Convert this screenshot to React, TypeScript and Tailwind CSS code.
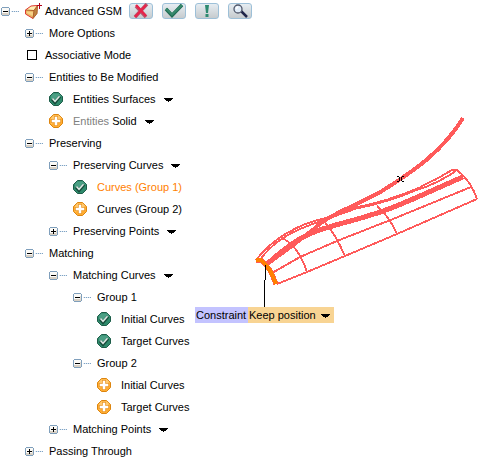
import { useState, type ReactNode } from "react";

type Status = "done" | "add";

interface TreeItem {
  id: string;
  label: string;
  prefix?: string;
  status?: Status;
  menu?: boolean;
  checkbox?: boolean;
  active?: boolean;
  open?: boolean;
  children?: TreeItem[];
}

const items: TreeItem[] = [
  { id: "more", label: "More Options" },
  { id: "assoc", label: "Associative Mode", checkbox: true },
  {
    id: "entities",
    label: "Entities to Be Modified",
    open: true,
    children: [
      { id: "surfaces", label: "Entities Surfaces", status: "done", menu: true },
      { id: "solid", prefix: "Entities", label: "Solid", status: "add", menu: true },
    ],
  },
  {
    id: "preserving",
    label: "Preserving",
    open: true,
    children: [
      {
        id: "pcurves",
        label: "Preserving Curves",
        menu: true,
        open: true,
        children: [
          { id: "pc1", label: "Curves (Group 1)", status: "done", active: true },
          { id: "pc2", label: "Curves (Group 2)", status: "add" },
        ],
      },
      { id: "ppoints", label: "Preserving Points", menu: true },
    ],
  },
  {
    id: "matching",
    label: "Matching",
    open: true,
    children: [
      {
        id: "mcurves",
        label: "Matching Curves",
        menu: true,
        open: true,
        children: [
          {
            id: "g1",
            label: "Group 1",
            open: true,
            children: [
              { id: "g1i", label: "Initial Curves", status: "done" },
              { id: "g1t", label: "Target Curves", status: "done" },
            ],
          },
          {
            id: "g2",
            label: "Group 2",
            open: true,
            children: [
              { id: "g2i", label: "Initial Curves", status: "add" },
              { id: "g2t", label: "Target Curves", status: "add" },
            ],
          },
        ],
      },
      { id: "mpoints", label: "Matching Points", menu: true },
    ],
  },
  { id: "passing", label: "Passing Through" },
];

function Arrow() {
  return (
    <svg width="9" height="4" viewBox="0 0 9 4" shapeRendering="crispEdges" aria-hidden="true">
      <path d="M0 0h9v1H0zM1 1h7v1H1zM2 2h5v1H2zM4 3h1v1H4z" fill="#000" />
    </svg>
  );
}

function Expander({ open, onToggle, label }: { open: boolean; onToggle: () => void; label: string }) {
  return (
    <button
      type="button"
      aria-expanded={open}
      aria-label={label}
      onClick={onToggle}
      className="flex w-6 shrink-0 items-center"
    >
      <svg width="18" height="9" viewBox="0 0 18 9" shapeRendering="crispEdges" aria-hidden="true">
        <path d="M1 0h7v1H1zM1 8h7v1H1zM0 1h1v7H0zM8 1h1v7H8z" fill="#7f9fbc" />
        <path d="M1 1h7v5H1z" fill="#fbfaf7" />
        <path d="M1 6h7v2H1z" fill="#d8d0c4" />
        <path d="M7 3h1v4H7z" fill="#e3ddd3" />
        <path d="M2 4h5v1H2z" fill="#000" />
        {!open && <path d="M4 2h1v5H4z" fill="#000" />}
        <path d="M10 4h8v1h-8z" fill="#dde8f2" />
        <path d="M11 4h1v1h-1zM13 4h1v1h-1zM15 4h1v1h-1zM17 4h1v1h-1z" fill="#7fa3c4" />
      </svg>
    </button>
  );
}

function StatusIcon({ status }: { status: Status }) {
  const octagon = "M4.5.5h5l4 4v5l-4 4h-5l-4-4v-5z";
  return (
    <span className="flex w-6 shrink-0">
      {status === "done" ? (
        <svg width="14" height="14" viewBox="0 0 14 14" role="img" aria-label="Defined">
          <path d={octagon} fill="#2f8a6c" stroke="#1d5c48" />
          <path d="M4 1.500h6L12.500 4 2 9V4z" fill="#5fae94" opacity=".6" />
          <path d="M3 7l3 3.500 5-6" fill="none" stroke="#174c3b" strokeWidth="3" />
          <path d="M3.500 6.500L6 9.200l4.500-5" fill="none" stroke="#dfeae6" strokeWidth="1.600" />
        </svg>
      ) : (
        <svg width="14" height="14" viewBox="0 0 14 14" role="img" aria-label="Add">
          <path d={octagon} fill="#ffac30" stroke="#dc8510" />
          <path d="M4 1.500h6L12.500 4 2 10V4z" fill="#ffd58a" opacity=".7" />
          <path d="M5 2h4v3h3v4H9v3H5V9H2V5h3z" fill="#ec9d35" />
          <path d="M6 3h2v3h3v2H8v3H6V8H3V6h3z" fill="#fff" stroke="#fff" strokeWidth=".4" />
        </svg>
      )}
    </span>
  );
}

function TreeNode({ item }: { item: TreeItem }) {
  const [open, setOpen] = useState(Boolean(item.open));
  return (
    <li>
      <div className="flex h-[22px] items-center whitespace-nowrap">
        {item.checkbox ? (
          <label className="flex items-center gap-2 pl-0.5">
            <input type="checkbox" className="size-[10px] appearance-none border border-black bg-white checked:bg-black" />
            {item.label}
          </label>
        ) : (
          <>
            {item.status ? (
              <StatusIcon status={item.status} />
            ) : (
              <Expander open={open} onToggle={() => setOpen(!open)} label={"Toggle " + item.label} />
            )}
            <span className={item.active ? "text-[#ff8000]" : ""}>
              {item.prefix && <span className="text-[#808080]">{item.prefix} </span>}
              {item.label}
            </span>
          </>
        )}
        {item.menu && (
          <button type="button" aria-label={item.label + " menu"} className="ml-2 pt-0.5">
            <Arrow />
          </button>
        )}
      </div>
      {item.children && open && (
        <ul className="pl-6">
          {item.children.map((child) => (
            <TreeNode key={child.id} item={child} />
          ))}
        </ul>
      )}
    </li>
  );
}

function ToolButton({ label, children }: { label: string; children: ReactNode }) {
  return (
    <button
      type="button"
      aria-label={label}
      className="flex h-4 w-6 items-center justify-center rounded-[3px] border border-[#9dc0d8] bg-linear-to-b from-[#e6edf2] to-[#c6cbce]"
    >
      <svg width="22" height="16" viewBox="0 0 22 16" className="shrink-0" aria-hidden="true">
        {children}
      </svg>
    </button>
  );
}

function SolidIcon() {
  return (
    <svg width="17" height="18" viewBox="0 0 17 18" className="shrink-0" aria-hidden="true">
      <path d="M.5 8L6 4l6.500-.5-.5 8-4 5L.5 12z" fill="#e9b765" />
      <path d="M.5 8L6 4l6.500-.5L9 8z" fill="#fff0b4" />
      <path d="M9 8l3.500-4.500-.5 8-4 5z" fill="#bd8540" />
      <path d="M2 9.500l6 .500v4L2 11z" fill="#f7d286" />
      <path d="M.5 8l8.500.500-1 8M9 8.500l3.500-5-.5 8-4 5" fill="none" stroke="#b3612d" />
      <path d="M12 3.500L6 4 .5 8v4l7.500 4.500" fill="none" stroke="#dd3a35" />
      <path d="M14 1h1v6h-1zM12 3h5v1h-5z" fill="#b00018" shapeRendering="crispEdges" />
    </svg>
  );
}

function Viewport() {
  return (
    <div className="relative min-w-0 flex-1">
      <svg
        width="291"
        height="440"
        viewBox="195 22 291 440"
        shapeRendering="crispEdges"
        fill="none"
        stroke="#ff5a5a"
        role="img"
        aria-label="Surface wireframe with constrained curves"
      >
        <path d="M463 118C443 151 414 171 382 191C353 207 326 216 314 229L293 245L266 265" strokeWidth="4" />
        <path d="M463 177C432 190 401 206 374 214C351 222 329 225 307 235Q289 244 266 265" strokeWidth="5" />
        <path d="M420 188C397 198 377 204 356 208L328 218" strokeWidth="3" />
        <g strokeWidth="1.900">
          <path d="M452 170Q436 180 420 187M456 171Q438 183 420 189" />
          <path d="M330 217C304 222 291 231 282 236Q267 246 256 260" />
          <path d="M328 219Q298 228 283 238Q269 247 260 260" />
          <path d="M452 170H457Q471 181 477 199" />
          <path d="M471 187L393 219L337 241L300 257L272 273" />
          <path d="M477 199L397 234L345 256L307 272L277 284" />
          <path d="M377 206Q389 216 397 234" />
          <path d="M323 220Q335 233 345 256" />
          <path d="M281 238Q297 243 307 272" />
        </g>
        <path d="M256 260L261 260L266 265L271 272L276 284" strokeWidth="5" />
        <path d="M256 260L261 260L266 265L271 272L276 284" stroke="#ff8000" strokeWidth="4" />
        <path d="M265.500 265V280M264.500 280V307" stroke="#000" strokeWidth="1" />
        <path
          d="M397 176h2v1h-2zM399 177h1v4h-1zM397 181h2v1h-2zM402 176h2v1h-2zM401 177h1v4h-1zM402 181h2v1h-2z"
          fill="#000"
          stroke="none"
        />
      </svg>
      <div className="absolute top-[285px] left-0 flex h-4 items-center whitespace-nowrap">
        <label htmlFor="constraint" className="flex h-4 w-[53px] items-center bg-[#c3c3ff] pl-px">
          Constraint
        </label>
        <div className="relative flex h-4 w-[86px] items-center bg-[#f8d493]">
          <select id="constraint" className="h-4 w-full appearance-none bg-transparent pl-px leading-4">
            <option>Keep position</option>
            <option>Free</option>
          </select>
          <span className="pointer-events-none absolute top-[7px] right-1">
            <Arrow />
          </span>
        </div>
      </div>
    </div>
  );
}

export default function App() {
  const [open, setOpen] = useState(true);
  return (
    <main className="bg-white font-['Liberation_Sans',Arial,sans-serif] text-[11px] leading-4 text-black">
      <header className="flex h-[22px] items-center pl-px">
        <Expander open={open} onToggle={() => setOpen(!open)} label="Toggle Advanced GSM" />
        <SolidIcon />
        <h1 className="w-[87px] pl-[3px] whitespace-nowrap">Advanced GSM</h1>
        <div className="flex gap-[9px]">
          <ToolButton label="Cancel">
            <path d="M6 3L16 14M17 1L5 14" stroke="#b8546c" strokeWidth="3.500" />
            <path d="M6 2L16 13M16 2L5 14" stroke="#e8234a" strokeWidth="2.300" />
          </ToolButton>
          <ToolButton label="Apply">
            <path d="M3 6L9 12.500L19 2" fill="none" stroke="#1f6b52" strokeWidth="3.500" />
            <path d="M3 5.500L9 11.500L19 2" fill="none" stroke="#36896c" strokeWidth="2" />
          </ToolButton>
          <ToolButton label="Information">
            <path d="M9 2h4l-1 8h-2z" fill="#2d8a70" />
            <path d="M9.500 11h3v3h-3z" fill="#2d8a70" />
          </ToolButton>
          <ToolButton label="Preview">
            <path d="M12 8l6 6" stroke="#20264a" strokeWidth="2.500" />
            <circle cx="9" cy="6" r="4" fill="#e0ecf8" stroke="#50576a" strokeWidth="1.300" />
            <path d="M7 6l2-2.500" stroke="#fff" strokeWidth="1.500" />
          </ToolButton>
        </div>
      </header>
      <div className="flex">
        <nav aria-label="Specification tree" className="w-[195px] shrink-0 pl-[25px]">
          {open && (
            <ul>
              {items.map((item) => (
                <TreeNode key={item.id} item={item} />
              ))}
            </ul>
          )}
        </nav>
        <Viewport />
      </div>
    </main>
  );
}
